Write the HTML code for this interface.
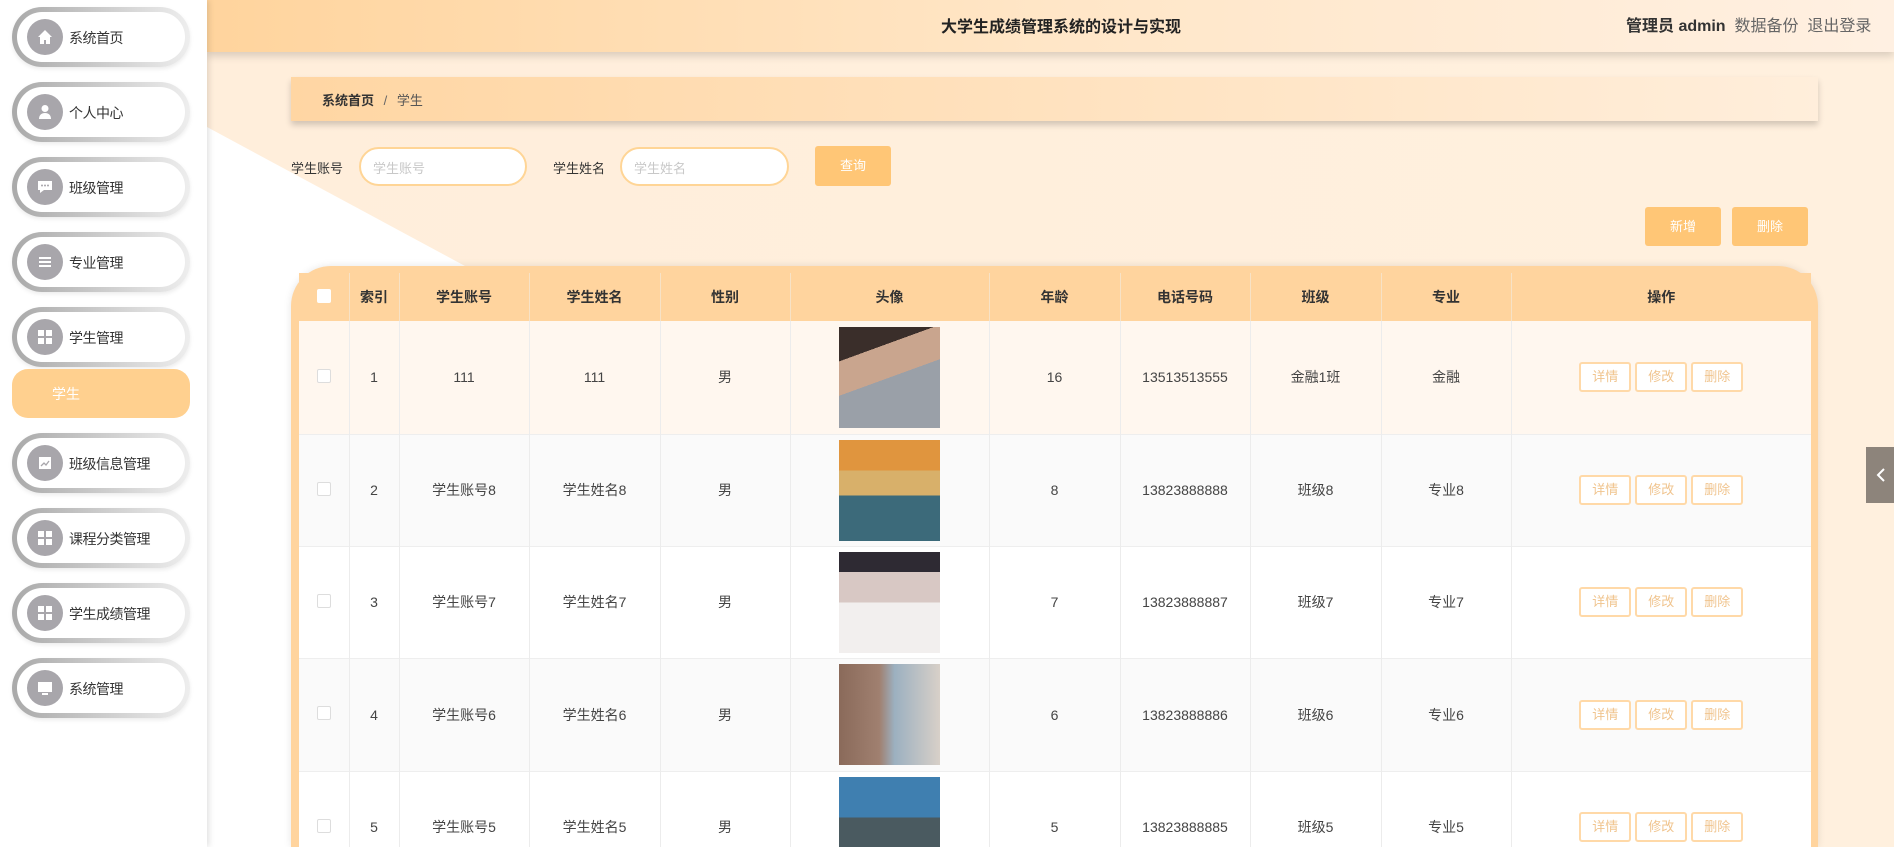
<!DOCTYPE html>
<html style="width:1894px;height:847px;overflow:hidden"><head><meta charset="utf-8"><style>
*{margin:0;padding:0;box-sizing:border-box}
body{width:1894px;height:847px;overflow:hidden;position:relative;font-family:"Liberation Sans","Noto Sans CJK SC",sans-serif;background:#fff0dd;color:#333}
.abs{position:absolute}
#side{left:0;top:0;width:207px;height:847px;background:#fff;box-shadow:2px 0 6px rgba(0,0,0,.12);z-index:5}
.pill{position:absolute;left:12px;width:178px;height:60px;border-radius:30px;background:linear-gradient(90deg,#a9a9a9,#eeeeee);padding:5px;box-shadow:0 2px 4px rgba(0,0,0,.08)}
.pill .in{width:100%;height:100%;border-radius:25px;background:#fff;position:relative;font-size:14px;color:#333}
.pill .ic{position:absolute;left:10px;top:7px;width:36px;height:36px;border-radius:50%;background:#a8a6ab}
.pill .ic svg{position:absolute;left:9px;top:9px}
.pill .t{position:absolute;left:52px;top:16px;letter-spacing:-.5px}
#hdr{left:207px;top:0;width:1687px;height:52px;background:linear-gradient(90deg,#ffd49d,#ffe6c7 50%,#fff0e2);box-shadow:0 4px 8px rgba(0,0,0,.15);z-index:4}
.btn{position:absolute;background:#ffc676;color:#fff;font-size:13px;text-align:center;border-radius:3px}
table{border-collapse:collapse;font-size:14px;color:#444}
td,th{border-right:1px solid #ececec;text-align:center;padding:0}
th{font-weight:bold;color:#333;border-right:1px solid #f7e2c6}
.ab{display:inline-block;width:52px;height:30px;border:2px solid #ffd9a8;border-radius:3px;font-size:13px;color:#f0c48e;line-height:26px;margin:0 2px;background:#fff}
.cb{display:inline-block;width:14px;height:14px;border:1px solid #ddd;border-radius:2px;background:#fff}
.img{width:101px;height:101px;margin:0 auto}
</style></head><body>
<div class="abs" style="left:207px;top:52px;width:1687px;height:795px;background:linear-gradient(90deg,#ffeedb,#fff0de)"></div>
<div class="abs" style="left:207px;top:127px;width:300px;height:720px;background:#fff;clip-path:polygon(0 0,258px 139px,300px 139px,300px 720px,0 720px)"></div>

<div id="side" class="abs">
 <div class="pill" style="top:7px"><div class="in"><div class="ic"><svg width="18" height="18" viewBox="0 0 18 18"><path d="M9 2L2 9h2v7h4v-4h2v4h4V9h2z" fill="#fff"/></svg></div><span class="t">系统首页</span></div></div>
 <div class="pill" style="top:82px"><div class="in"><div class="ic"><svg width="18" height="18" viewBox="0 0 18 18"><circle cx="9" cy="5.5" r="3.5" fill="#fff"/><path d="M3 16c0-4 2.5-6 6-6s6 2 6 6z" fill="#fff"/></svg></div><span class="t">个人中心</span></div></div>
 <div class="pill" style="top:157px"><div class="in"><div class="ic"><svg width="18" height="18" viewBox="0 0 18 18"><path d="M2 3h14v9H8l-4 3v-3H2z" fill="#fff"/><circle cx="6" cy="7.5" r="1" fill="#a8a6ab"/><circle cx="9" cy="7.5" r="1" fill="#a8a6ab"/><circle cx="12" cy="7.5" r="1" fill="#a8a6ab"/></svg></div><span class="t">班级管理</span></div></div>
 <div class="pill" style="top:232px"><div class="in"><div class="ic"><svg width="18" height="18" viewBox="0 0 18 18"><rect x="3" y="4" width="12" height="2" fill="#fff"/><rect x="3" y="8" width="12" height="2" fill="#fff"/><rect x="3" y="12" width="12" height="2" fill="#fff"/></svg></div><span class="t">专业管理</span></div></div>
 <div class="pill" style="top:307px"><div class="in"><div class="ic"><svg width="18" height="18" viewBox="0 0 18 18"><rect x="2" y="2" width="6" height="6" fill="#fff"/><rect x="10" y="2" width="6" height="6" fill="#fff"/><rect x="2" y="10" width="6" height="6" fill="#fff"/><rect x="10" y="10" width="6" height="6" fill="#fff"/></svg></div><span class="t">学生管理</span></div></div>
 <div class="abs" style="left:12px;top:369px;width:178px;height:49px;border-radius:16px;background:#ffd08f;color:#fff;font-size:14px;padding:15px 0 0 40px">学生</div>
 <div class="pill" style="top:433px"><div class="in"><div class="ic"><svg width="18" height="18" viewBox="0 0 18 18"><rect x="3" y="3" width="12" height="12" fill="#fff"/><path d="M5 12l3-3 2 2 3-4" stroke="#a8a6ab" stroke-width="1.3" fill="none"/></svg></div><span class="t">班级信息管理</span></div></div>
 <div class="pill" style="top:508px"><div class="in"><div class="ic"><svg width="18" height="18" viewBox="0 0 18 18"><rect x="2" y="2" width="6" height="6" fill="#fff"/><rect x="10" y="2" width="6" height="6" fill="#fff"/><rect x="2" y="10" width="6" height="6" fill="#fff"/><rect x="10" y="10" width="6" height="6" fill="#fff"/></svg></div><span class="t">课程分类管理</span></div></div>
 <div class="pill" style="top:583px"><div class="in"><div class="ic"><svg width="18" height="18" viewBox="0 0 18 18"><rect x="2" y="2" width="6" height="6" fill="#fff"/><rect x="10" y="2" width="6" height="6" fill="#fff"/><rect x="2" y="10" width="6" height="6" fill="#fff"/><rect x="10" y="10" width="6" height="6" fill="#fff"/></svg></div><span class="t">学生成绩管理</span></div></div>
 <div class="pill" style="top:658px"><div class="in"><div class="ic"><svg width="18" height="18" viewBox="0 0 18 18"><rect x="2" y="3" width="14" height="10" fill="#fff"/><rect x="6" y="14" width="6" height="2" fill="#fff"/></svg></div><span class="t">系统管理</span></div></div>
</div>

<div id="hdr" class="abs">
 <div class="abs" style="left:0;width:1708px;top:13px;text-align:center;font-size:16px;font-weight:bold;color:#222">大学生成绩管理系统的设计与实现</div>
 <div class="abs" style="left:1419px;top:12px;font-size:16px;white-space:nowrap"><b style="color:#333">管理员 admin</b>&nbsp; <span style="color:#666">数据备份</span>&nbsp; <span style="color:#666">退出登录</span></div>
</div>

<div class="abs" style="left:291px;top:77px;width:1527px;height:44px;background:linear-gradient(90deg,#ffd6a3,#ffeedb);box-shadow:0 4px 6px rgba(0,0,0,.18);font-size:13px;padding:13px 0 0 31px"><b style="color:#333">系统首页</b> <span style="color:#666;margin:0 6px">/</span> <span style="color:#555">学生</span></div>

<div class="abs" style="left:291px;top:158px;font-size:13px">学生账号</div>
<div class="abs" style="left:359px;top:147px;width:168px;height:39px;border:2px solid #ffd596;border-radius:20px;background:#fff;font-size:13px;color:#c8c8c8;padding:9px 0 0 12px">学生账号</div>
<div class="abs" style="left:553px;top:158px;font-size:13px">学生姓名</div>
<div class="abs" style="left:620px;top:147px;width:169px;height:39px;border:2px solid #ffd596;border-radius:20px;background:#fff;font-size:13px;color:#c8c8c8;padding:9px 0 0 12px">学生姓名</div>
<div class="btn" style="left:815px;top:146px;width:76px;height:40px;line-height:40px">查询</div>
<div class="btn" style="left:1645px;top:207px;width:76px;height:39px;line-height:39px">新增</div>
<div class="btn" style="left:1732px;top:207px;width:76px;height:39px;line-height:39px">删除</div>

<div class="abs" style="left:291px;top:266px;width:1527px;height:581px;background:#ffd49e;border-radius:40px 40px 0 0;box-shadow:0 0 8px rgba(0,0,0,.1)"></div>
<div class="abs" style="left:299px;top:273px;width:1512px;height:574px;overflow:hidden">
<table style="width:1512px">
<colgroup><col style="width:50px"><col style="width:50px"><col style="width:130px"><col style="width:131px"><col style="width:130px"><col style="width:199px"><col style="width:131px"><col style="width:130px"><col style="width:131px"><col style="width:130px"><col></colgroup>
<tr style="height:48px;background:#ffd49e"><th><span class="cb" style="border:none"></span></th><th>索引</th><th>学生账号</th><th>学生姓名</th><th>性别</th><th>头像</th><th>年龄</th><th>电话号码</th><th>班级</th><th>专业</th><th style="border:none">操作</th></tr>
<tr style="height:113px;background:#fff7ef;border-bottom:1px solid #eee"><td><span class="cb"></span></td><td>1</td><td>111</td><td>111</td><td>男</td><td><div class="img" style="background:linear-gradient(160deg,#3a2e2a 0 25%,#c9a58e 25% 50%,#9aa0a8 50%)"></div></td><td>16</td><td>13513513555</td><td>金融1班</td><td>金融</td><td style="border:none"><span class="ab">详情</span><span class="ab">修改</span><span class="ab">删除</span></td></tr>
<tr style="height:112px;background:#fafafa;border-bottom:1px solid #eee"><td><span class="cb"></span></td><td>2</td><td>学生账号8</td><td>学生姓名8</td><td>男</td><td><div class="img" style="background:linear-gradient(180deg,#e0953e 0 30%,#d8b06a 30% 55%,#3c6a7a 55%)"></div></td><td>8</td><td>13823888888</td><td>班级8</td><td>专业8</td><td style="border:none"><span class="ab">详情</span><span class="ab">修改</span><span class="ab">删除</span></td></tr>
<tr style="height:112px;background:#fff;border-bottom:1px solid #eee"><td><span class="cb"></span></td><td>3</td><td>学生账号7</td><td>学生姓名7</td><td>男</td><td><div class="img" style="background:linear-gradient(180deg,#2e2a33 0 20%,#d8c8c4 20% 50%,#f2efee 50%)"></div></td><td>7</td><td>13823888887</td><td>班级7</td><td>专业7</td><td style="border:none"><span class="ab">详情</span><span class="ab">修改</span><span class="ab">删除</span></td></tr>
<tr style="height:113px;background:#fafafa;border-bottom:1px solid #eee"><td><span class="cb"></span></td><td>4</td><td>学生账号6</td><td>学生姓名6</td><td>男</td><td><div class="img" style="background:linear-gradient(90deg,#8a6a5a,#a08070 40%,#9cb0c0 55%,#d8d0c8)"></div></td><td>6</td><td>13823888886</td><td>班级6</td><td>专业6</td><td style="border:none"><span class="ab">详情</span><span class="ab">修改</span><span class="ab">删除</span></td></tr>
<tr style="height:112px;background:#fff"><td><span class="cb"></span></td><td>5</td><td>学生账号5</td><td>学生姓名5</td><td>男</td><td><div class="img" style="background:linear-gradient(180deg,#3f7fb0 0 40%,#4a5a60 40%)"></div></td><td>5</td><td>13823888885</td><td>班级5</td><td>专业5</td><td style="border:none"><span class="ab">详情</span><span class="ab">修改</span><span class="ab">删除</span></td></tr>
</table></div>

<div class="abs" style="left:1866px;top:447px;width:28px;height:56px;background:#8d847b"><svg class="abs" style="left:8px;top:20px" width="12" height="16" viewBox="0 0 12 16"><path d="M10 2L4 8l6 6" stroke="#fff" stroke-width="2" fill="none"/></svg></div>
</body></html>
